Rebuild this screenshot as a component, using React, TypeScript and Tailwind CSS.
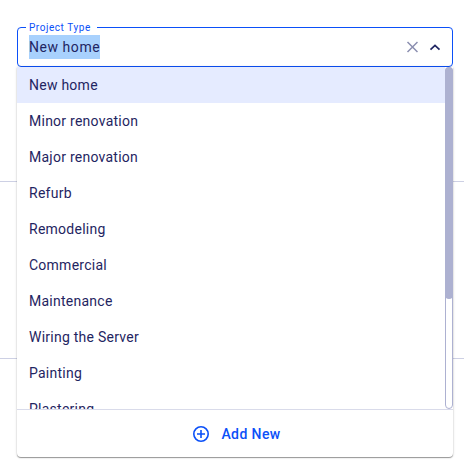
const projectTypes = [
  "New home",
  "Minor renovation",
  "Major renovation",
  "Refurb",
  "Remodeling",
  "Commercial",
  "Maintenance",
  "Wiring the Server",
  "Painting",
  "Plastering",
];

function CloseIcon() {
  return (
    <svg width="12" height="12" viewBox="0 0 12 12" fill="none" stroke="#8b8fb0" strokeWidth="1.5">
      <path d="M1.5 1l10 10M11.5 1l-10 10" />
    </svg>
  );
}

function ChevronIcon() {
  return (
    <svg width="12" height="8" viewBox="0 0 12 8" fill="none" stroke="#1f2562" strokeWidth="1.7">
      <path d="M1.5 6.6L6 2.4l4.5 4.2" />
    </svg>
  );
}

function PlusCircleIcon() {
  return (
    <svg width="16" height="16" viewBox="0 0 16 16" fill="none" stroke="#0b50f8" strokeWidth="1.6">
      <circle cx="8" cy="8" r="7.2" />
      <path d="M8 4v8M4 8h8" />
    </svg>
  );
}

function Menu() {
  return (
    <div className="absolute top-full left-0 w-full h-[390px] flex flex-col bg-white rounded-b shadow-[0_1px_1px_rgba(0,0,0,0.38),0_0_3px_rgba(0,0,0,0.16)]">
      <div className="flex h-[342px] overflow-hidden">
        <ul className="flex-1 min-w-0">
          {projectTypes.map((type, index) => (
            <li
              key={type}
              className={`h-9 px-3 text-sm leading-9 tracking-[0.25px] ${index === 0 ? "bg-[#e5ebff]" : ""}`}
            >
              {type}
            </li>
          ))}
        </ul>
        {/* Scrollbar */}
        <div className="w-2 h-full rounded border border-[#adb1d1] bg-white">
          <div className="-mx-px -mt-px h-[232px] rounded bg-[#adb1d1]" />
        </div>
      </div>
      <button className="flex flex-1 items-center justify-center gap-3 border-t border-[#d9dbea] pl-1 text-sm font-medium tracking-[0.4px] text-[#0b50f8]">
        <PlusCircleIcon />
        Add New
      </button>
    </div>
  );
}

export default function App() {
  return (
    <div className="h-[475px] overflow-hidden bg-white font-[Roboto,sans-serif] text-[#1f2562]">
      <section className="h-[182px] border-b border-[#cdd0e4] pl-[17px] pr-[11px] pt-[27px]">
        <div className="relative z-10">
          <div className="flex h-10 items-center rounded border border-[#0b50f8] bg-white pl-[11px] pr-[11px] text-sm">
            <span className="bg-[#a8d1fd] leading-6 tracking-[0.55px]">New home</span>
            <span className="ml-auto flex items-center gap-[11px]">
              <CloseIcon />
              <ChevronIcon />
            </span>
          </div>
          {/* Label sits over the top border */}
          <label className="absolute -top-[6px] left-[9px] bg-white pl-[3px] pr-[6px] text-[10px] leading-[14px] tracking-[0.56px] text-[#0b50f8]">
            Project Type
          </label>
          <Menu />
        </div>
      </section>
      <section className="h-[177px] border-b border-[#cdd0e4]" />
    </div>
  );
}
